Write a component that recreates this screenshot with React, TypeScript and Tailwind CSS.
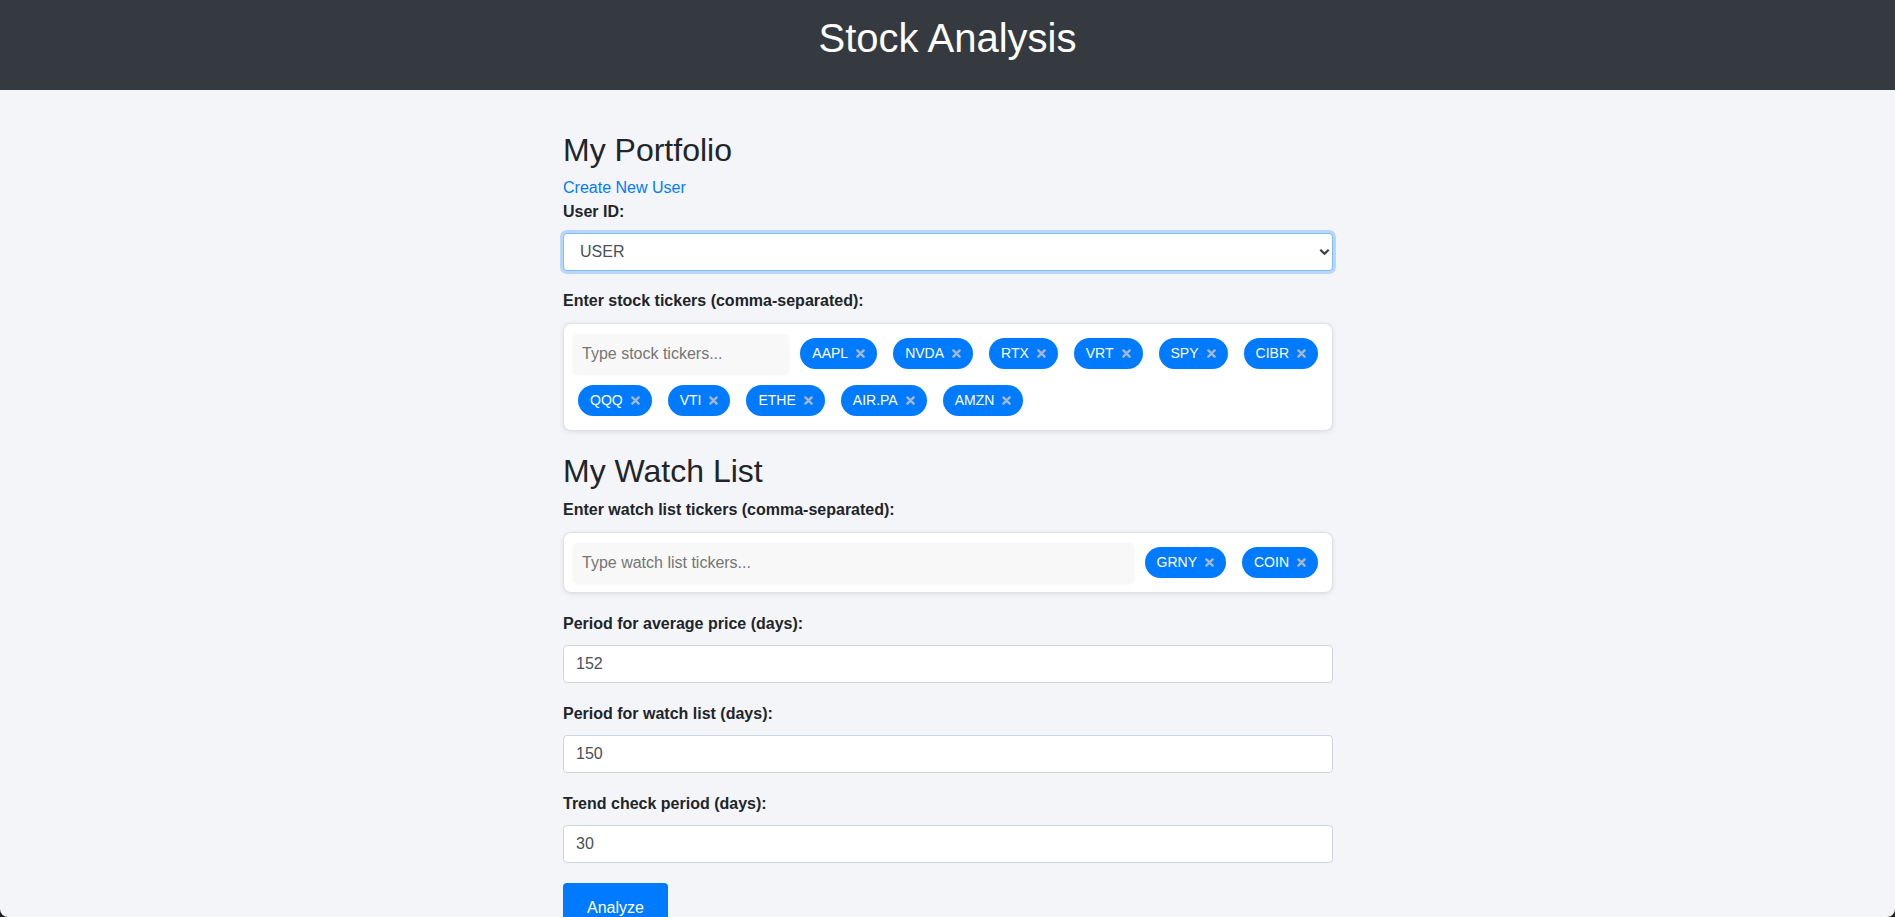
import React from "react";

const stockTickers = ["AAPL", "NVDA", "RTX", "VRT", "SPY", "CIBR", "QQQ", "VTI", "ETHE", "AIR.PA", "AMZN"];
const watchTickers = ["GRNY", "COIN"];

function XIcon() {
  return (
    <svg width="9" height="9" viewBox="0 0 9 9" className="shrink-0">
      <path d="M1.4 1.4 L7.6 7.6 M7.6 1.4 L1.4 7.6" stroke="#a9b7cc" strokeWidth="2.4" strokeLinecap="round" />
    </svg>
  );
}

function Tag({ label }: { label: string }) {
  return (
    <span className="mx-[5px] my-[5px] inline-flex h-[31px] items-center gap-[8px] rounded-full bg-[#007bff] px-[12px] text-[14px] leading-[21px] text-white">
      {label}
      <XIcon />
    </span>
  );
}

function TagBox({ placeholder, tags }: { placeholder: string; tags: string[] }) {
  return (
    <div className="flex flex-wrap items-center gap-[6px] rounded-[8px] border border-[#dfe2e6] bg-white p-[9px] shadow-[0_1px_4px_rgba(0,0,0,0.1)]">
      <input
        placeholder={placeholder}
        className="h-[40px] min-w-[200px] flex-1 rounded-[5px] bg-[#f8f8f8] px-[9px] text-[16px] text-[#495057] shadow-[0_1px_3px_rgba(0,0,0,0.05)] outline-none placeholder:text-[#757575]"
      />
      {tags.map((t) => (
        <Tag key={t} label={t} />
      ))}
    </div>
  );
}

function Field({ label, value }: { label: string; value: string }) {
  return (
    <div className="mb-[19px]">
      <label className="mb-[9px] block text-[16px] font-bold leading-[24px] text-[#212529]">{label}</label>
      <input
        defaultValue={value}
        className="h-[38px] w-full rounded-[4px] border border-[#ced4da] bg-white px-[12px] text-[16px] text-[#495057] outline-none"
      />
    </div>
  );
}

export default function App() {
  return (
    <div
      className="h-screen overflow-hidden bg-[#202020]"
      style={{ fontFamily: '"Liberation Sans", Arial, sans-serif' }}
    >
      <div className="h-full overflow-hidden rounded-b-[8px] bg-[#f4f5f9]">
        <header className="h-[90px] bg-[#343a40] pt-[14px]">
          <h1 className="text-center text-[40px] font-normal leading-[48px] text-white">Stock Analysis</h1>
        </header>

        <div className="mx-auto w-[771px] pl-[1px]">
          <main className="pt-[41px] text-[#212529]">
            <h2 className="mb-[7px] text-[32px] font-normal leading-[38px]">My Portfolio</h2>
            <a href="#" className="block text-[16px] leading-[24px] text-[#007bff]">
              Create New User
            </a>
            <label className="mb-[9px] block text-[16px] font-bold leading-[24px]">User ID:</label>
            <div className="relative mb-[18px]">
              <select className="h-[38px] w-full appearance-none rounded-[4px] border border-[#80bdff] bg-white pl-[16px] text-[16px] text-[#495057] shadow-[0_0_0_3px_rgba(0,123,255,0.25)] outline-none">
                <option>USER</option>
              </select>
              <svg
                width="11"
                height="7"
                viewBox="0 0 11 7"
                className="pointer-events-none absolute right-[3px] top-1/2 -translate-y-1/2"
              >
                <path d="M1.3 1.3 L5.5 5.3 L9.7 1.3" fill="none" stroke="#3b3f44" strokeWidth="2.2" />
              </svg>
            </div>

            <label className="mb-[10px] block text-[16px] font-bold leading-[24px]">
              Enter stock tickers (comma-separated):
            </label>
            <TagBox placeholder="Type stock tickers..." tags={stockTickers} />

            <h2 className="mb-[8px] mt-[21px] text-[32px] font-normal leading-[38px]">My Watch List</h2>
            <label className="mb-[10px] block text-[16px] font-bold leading-[24px]">
              Enter watch list tickers (comma-separated):
            </label>
            <div className="mb-[19px]">
              <TagBox placeholder="Type watch list tickers..." tags={watchTickers} />
            </div>

            <Field label="Period for average price (days):" value="152" />
            <Field label="Period for watch list (days):" value="150" />
            <Field label="Trend check period (days):" value="30" />

            <button className="mt-[1px] rounded-[4px] bg-[#007bff] px-[24px] py-[13px] text-[16px] leading-[24px] text-white">
              Analyze
            </button>
          </main>
        </div>
      </div>
    </div>
  );
}
